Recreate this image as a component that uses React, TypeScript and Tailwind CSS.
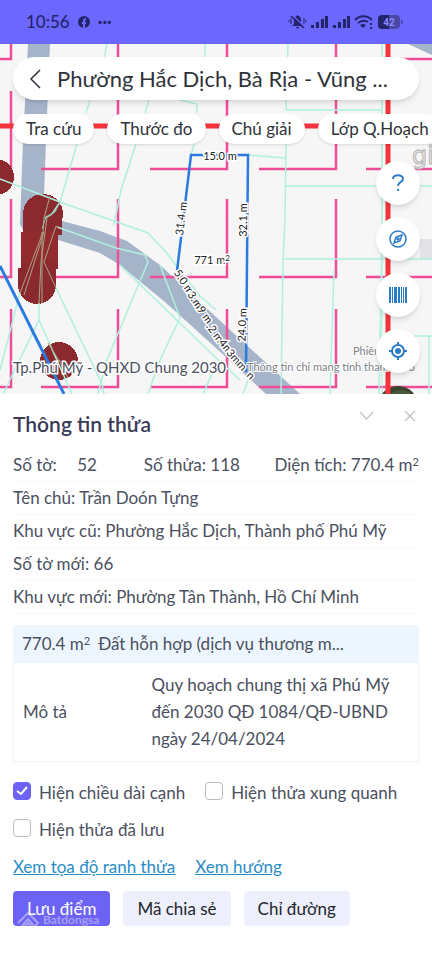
import type { ReactNode } from "react";

type EdgeLabel = { text: string; x: number; y: number; angle: number };

const chips = ["Tra cứu", "Thước đo", "Chú giải", "Lớp Q.Hoạch"];

const edgeLabels: EdgeLabel[] = [
  { text: "15.0 m", x: 220, y: 160, angle: 0 },
  { text: "31.4 m", x: 185, y: 219, angle: -83 },
  { text: "32.1 m", x: 247, y: 220, angle: -90 },
  { text: "24.0 m", x: 246, y: 325, angle: -88 },
  { text: "5.0 m", x: 181, y: 284, angle: 56 },
  { text: "3.m", x: 192, y: 302, angle: 56 },
  { text: "9 m", x: 202, y: 317, angle: 54 },
  { text: ".2 m", x: 212, y: 335, angle: 54 },
  { text: "4m", x: 223, y: 349, angle: 50 },
  { text: "3m", x: 231, y: 359, angle: 48 },
  { text: "m", x: 239, y: 368, angle: 48 },
  { text: "n", x: 248, y: 378, angle: 48 },
];

const gridRows = [59, 169, 277, 387];
const gridColumns = [11, 118, 227, 336, 443];

const MapCanvas = () => (
  <svg
    viewBox="0 44 432 350"
    preserveAspectRatio="xMidYMin slice"
    className="absolute inset-0 h-full w-full bg-[#f6f6f6] font-['Lato','Noto_Sans',sans-serif]"
  >
    <rect x="420" y="239" width="12" height="21" fill="#e4e4e8" />
    <g fill="#a6b4ca">
      <path d="M28 44H50L46 140L43 224L62 221L100 231L127 241L160 265L216 317L300 394H266L216 348L165 302L120 265L100 253L55 239L25 234L20 224L23 140Z" />
      <path d="M408 44H432V55Z" />
    </g>
    <g stroke="#ee4d98" strokeWidth="2.500" fill="none">
      {gridRows.map((y) =>
        gridColumns.map((x) => (
          <path key={`${x}-${y}`} d={`M${x - 77} ${y}H${x}V${y - 78}`} />
        ))
      )}
    </g>
    <g fill="#8b2a2e" shapeRendering="crispEdges">
      <circle cx="-4" cy="177" r="18" />
      <circle cx="43" cy="214" r="20" />
      <rect x="23" y="214" width="39" height="21" />
      <rect x="21" y="232" width="37" height="37" />
      <rect x="18" y="268" width="38" height="17" />
      <circle cx="37" cy="285" r="19" />
      <circle cx="59" cy="361" r="19" />
    </g>
    <rect x="21" y="232" width="37" height="30" fill="#a33030" opacity="0.3" />
    <circle cx="398" cy="406" r="20" fill="#38452f" />
    <circle cx="401" cy="404" r="14" fill="#5c6b4b" opacity="0.5" />
    <g stroke="#aef0df" strokeWidth="1.500" fill="none">
      <path d="M0 179L60 202L148 233L165 251L178 268L200 296L216 310" />
      <path d="M107 44L103 64M90 100L86 113M77 144L60 202L52 214L45 218" />
      <path d="M149 100L145 113M136 144L121 190L114 225" />
      <path d="M180 100L197 104L197 113M205 44V57" />
      <path d="M57 227L116 248L145 255L148 262L107 360L98 394" />
      <path d="M160 265L180 318L160 360L148 394" />
      <path d="M120 265L216 358L240 380" />
      <path d="M39 303V320L3 394M56 288L102 384L104 394" />
      <path d="M39 320L72 394M20 293L0 370M216 365L203 394M248 380L243 394" />
      <path d="M288 44L286 110H381M286 144L285 220L283 260L281 394" />
      <path d="M382 44V240L379 394M285 186H432M248 155L286 158M284 259H432M334 270L330 394" />
      <path d="M379 336H432M429 336V394M194 144L191 155" />
    </g>
    <g stroke="#a9a586" strokeWidth="1" fill="none">
      <path d="M50 196L44 218L43 232L20 293M44 232L24 295M47 218L41 262L39 303M44 262L56 288M56 226L44 262M42 232V303M56 226L60 229" />
      <path d="M48 343L60 362L68 378" />
      <path d="M60 202L55 212L46 217L42 229" stroke="#8fc7a8" />
    </g>
    <path d="M0 126H432M388 44V394" stroke="#f4343c" strokeWidth="5" />
    <path d="M382 44V394" stroke="#aef0df" />
    <g fill="none" stroke="#2a7ae0">
      <path d="M0 266L64 394" strokeWidth="3" />
      <path d="M177 271L191 155H248L246 372" strokeWidth="2.500" />
    </g>
    <text
      x="412"
      y="164"
      fontSize="24"
      fill="#eee"
      stroke="#b3b3b3"
      strokeWidth="1"
      className="font-['DejaVu_Sans',sans-serif]"
    >
      gi
    </text>
    <g
      fontSize="11"
      fill="#222"
      stroke="#fff"
      strokeWidth="3"
      paintOrder="stroke"
      textAnchor="middle"
    >
      {edgeLabels.map(({ text, x, y, angle }) => (
        <text key={`${x}-${y}`} transform={`translate(${x} ${y}) rotate(${angle})`}>
          {text}
        </text>
      ))}
      <text x="212" y="264">
        771 m
        <tspan fontSize="8" dy="-3">
          2
        </tspan>
      </text>
    </g>
    <g stroke="#fff" strokeWidth="3" paintOrder="stroke">
      <text x="13" y="373" fontSize="15" fill="#4a5060">
        Tp.Phú Mỹ - QHXD Chung 2030
      </text>
      <g fontSize="11" fill="#7c7f88">
        <text x="353" y="355" strokeWidth="1">Phiên</text>
        <text x="247" y="371" strokeWidth="2">Thông tin chỉ mang tính tham khảo</text>
      </g>
    </g>
  </svg>
);

const StatusIcons = () => (
  <svg viewBox="0 0 116 18" className="h-[18px] w-[116px]" fill="#24246a">
    <path d="M4 13L6 11V7C6 4 8 3 9 3V2H10V3C12 3 13 5 13 7V11L15 13ZM8 14H11C11 16 8 16 8 14Z" />
    <path d="M3 5V11M1 7V9M16 5V11M18 7V9" stroke="#24246a" strokeWidth="1" />
    <path d="M4 2L17 14" stroke="#6c67ff" strokeWidth="1.500" />
    <path d="M3 3L16 15" stroke="#24246a" strokeWidth="1.500" />
    <path d="M23 12h3v3h-3zM28 9h3v6h-3zM33 6h3v9h-3zM37 3h3v12h-3z" />
    <path d="M45 12h3v3h-3zM50 9h3v6h-3zM55 6h3v9h-3zM59 3h3v12h-3z" />
    <g fill="none" stroke="#24246a" strokeWidth="2">
      <path d="M67 7C72 2 79 2 84 7M70 10C74 7 77 7 80 9" />
    </g>
    <path d="M72 12Q75 10 78 12L75 15ZM82 10h2v2h-2zM82 14h2v2h-2z" />
    <rect x="90" y="2" width="22" height="14" rx="4" fill="#4b48a8" />
    <path d="M94 2H101V16H94Q90 16 90 12V6Q90 2 94 2Z" />
    <path d="M113 6Q117 9 113 12Z" fill="#4b48a8" />
    <text
      x="101"
      y="13"
      fontSize="10"
      fontWeight="700"
      textAnchor="middle"
      fill="#8d89ff"
      className="font-['Roboto',sans-serif]"
    >
      42
    </text>
  </svg>
);

const CompassIcon = () => (
  <svg viewBox="0 0 18 18" className="size-[18px]" fill="none" stroke="#2b7cc7" strokeWidth="1.500">
    <circle cx="9" cy="9" r="8" />
    <path d="M13 5L11 11L5 13L7 7Z" />
    <circle cx="9" cy="9" r="1" />
  </svg>
);

const BarcodeIcon = () => (
  <svg viewBox="0 0 18 16" className="h-4 w-[18px]" fill="#2b7cc7">
    <path d="M0 0h2v16h-2zM3 0h1v16h-1zM5 0h3v16h-3zM9 0h2v16h-2zM12 0h1v16h-1zM14 0h1v16h-1zM16 0h2v16h-2z" />
  </svg>
);

const LocateIcon = () => (
  <svg viewBox="0 0 18 18" className="size-[18px]" fill="none" stroke="#2b7cc7" strokeWidth="2">
    <circle cx="9" cy="9" r="6" />
    <circle cx="9" cy="9" r="2" fill="#2b7cc7" />
    <path d="M9 0V3M9 15V18M0 9H3M15 9H18" />
  </svg>
);

const HelpIcon = () => (
  <svg viewBox="0 0 12 18" className="h-[18px] w-3" fill="none" stroke="#2b7cc7" strokeWidth="2">
    <path d="M1 5C1 0 11 0 11 5C11 8 6 8 6 12" />
    <path d="M5 15H7V17H5Z" fill="#2b7cc7" stroke="none" />
  </svg>
);

const MapButton = ({ label, children }: { label: string; children: ReactNode }) => (
  <button
    type="button"
    aria-label={label}
    className="flex size-11 items-center justify-center rounded-full bg-white shadow-md"
  >
    {children}
  </button>
);

const SquareMetres = ({ value }: { value: string }) => (
  <span>
    {value} m<sup className="text-[11px]">2</sup>
  </span>
);

const Option = ({
  id,
  label,
  defaultChecked,
}: {
  id: string;
  label: string;
  defaultChecked?: boolean;
}) => (
  <div className="flex h-[37px] items-start gap-2">
    <span className="relative size-[18px]">
      <input
        type="checkbox"
        id={id}
        defaultChecked={defaultChecked}
        className="peer block size-[18px] appearance-none rounded border border-[#b9bbc4] bg-white checked:border-[#6c63f5] checked:bg-[#6c63f5]"
      />
      <svg
        viewBox="0 0 18 18"
        className="pointer-events-none absolute inset-0 hidden size-[18px] peer-checked:block"
        fill="none"
        stroke="#fff"
        strokeWidth="2"
      >
        <path d="M4 9L8 12L14 5" />
      </svg>
    </span>
    <label htmlFor={id}>{label}</label>
  </div>
);

const App = () => {
  const rowStyle = "h-[33px] items-center border-b border-[#f8f8f9]";
  const actionStyle = "h-[35px] rounded px-3.5";

  return (
    <div className="min-h-screen bg-white font-['Lato','Noto_Sans',sans-serif] text-[17px] leading-[22px] text-[#4b5060]">
      <header className="flex h-11 items-center justify-between bg-[#6c67ff] pr-7 pl-[26px] text-[#24246a]">
        <div className="flex items-center gap-2">
          <span className="font-medium">10:56</span>
          <svg viewBox="0 0 12 12" className="size-3">
            <circle cx="6" cy="6" r="6" fill="#24246a" />
            <path d="M6 12V5Q6 3 8 3M4 7H8" stroke="#6c67ff" strokeWidth="2" fill="none" />
          </svg>
          <span className="font-bold">···</span>
        </div>
        <StatusIcons />
      </header>

      <section className="relative h-[350px] overflow-hidden">
        <MapCanvas />
        <div className="relative pt-[13px] pl-[13px]">
          <div className="mr-[13px] flex h-[43px] items-center gap-4 rounded-full bg-white pl-4 text-[#30323a] shadow-md">
            <button type="button" aria-label="Quay lại">
              <svg viewBox="0 0 12 20" className="h-5 w-3" fill="none" stroke="currentColor" strokeWidth="1.500">
                <path d="M11 1L2 10L11 19" />
              </svg>
            </button>
            <h1 className="text-[22px]">Phường Hắc Dịch, Bà Rịa - Vũng ...</h1>
          </div>
          <div className="mt-[14px] flex gap-[13px] overflow-hidden pb-1">
            {chips.map((chip) => (
              <button
                key={chip}
                type="button"
                className="h-[30px] shrink-0 rounded-full bg-white px-[13px] whitespace-nowrap text-[#30323a] shadow-sm"
              >
                {chip}
              </button>
            ))}
          </div>
          <div className="mt-[13px] mr-3 flex flex-col items-end gap-3">
            <MapButton label="Trợ giúp">
              <HelpIcon />
            </MapButton>
            <MapButton label="La bàn">
              <CompassIcon />
            </MapButton>
            <MapButton label="Mã vạch">
              <BarcodeIcon />
            </MapButton>
            <MapButton label="Vị trí của tôi">
              <LocateIcon />
            </MapButton>
          </div>
        </div>
      </section>

      <main className="px-[13px]">
        <div className="flex items-start justify-between pt-3">
          <h2 className="pt-1 text-[21px] leading-7 font-semibold text-[#3b3b58]">Thông tin thửa</h2>
          <div className="flex gap-[30px] pt-1 pr-[3px] text-[#c5c7cc]">
            <button type="button" aria-label="Thu gọn">
              <svg viewBox="0 0 15 12" className="h-3 w-[15px]" fill="none" stroke="currentColor" strokeWidth="1.500">
                <path d="M1 2L7.500 9L14 2" />
              </svg>
            </button>
            <button type="button" aria-label="Đóng">
              <svg viewBox="0 0 12 12" className="size-3" fill="none" stroke="currentColor" strokeWidth="1.500">
                <path d="M1 1L11 11M11 1L1 11" />
              </svg>
            </button>
          </div>
        </div>

        <div className="mt-[11px]">
          <div className={`${rowStyle} grid grid-cols-[1fr_1fr_auto]`}>
            <span>
              Số tờ: <span className="ml-4">52</span>
            </span>
            <span>Số thửa: 118</span>
            <SquareMetres value="Diện tích: 770.4" />
          </div>
          <p className={`${rowStyle} flex`}>Tên chủ: Trần Doón Tựng</p>
          <p className={`${rowStyle} flex`}>Khu vực cũ: Phường Hắc Dịch, Thành phố Phú Mỹ</p>
          <p className={`${rowStyle} flex`}>Số tờ mới: 66</p>
          <p className={`${rowStyle} flex`}>Khu vực mới: Phường Tân Thành, Hồ Chí Minh</p>
        </div>

        <table className="mt-[11px] w-full border border-[#f3f4f6] text-left">
          <thead className="bg-[#edf6fe]">
            <tr className="h-[37px]">
              <th colSpan={2} className="px-2 font-normal">
                <SquareMetres value="770.4" />
                <span className="ml-2">Đất hỗn hợp (dịch vụ thương m...</span>
              </th>
            </tr>
          </thead>
          <tbody>
            <tr className="h-[99px]">
              <td className="w-[138px] pl-[9px]">Mô tả</td>
              <td className="pr-5 leading-[27px]">
                Quy hoạch chung thị xã Phú Mỹ đến 2030 QĐ 1084/QĐ-UBND ngày 24/04/2024
              </td>
            </tr>
          </tbody>
        </table>

        <div className="mt-5 flex flex-wrap gap-x-5">
          <Option id="edges" label="Hiện chiều dài cạnh" defaultChecked />
          <Option id="around" label="Hiện thửa xung quanh" />
          <Option id="saved" label="Hiện thửa đã lưu" />
        </div>

        <div className="flex gap-5 text-[#2a8cc6] underline">
          <a href="#coordinates">Xem tọa độ ranh thửa</a>
          <a href="#direction">Xem hướng</a>
        </div>

        <div className="mt-[13px] flex gap-[13px] text-[#24262e]">
          <button type="button" className={`${actionStyle} relative overflow-hidden bg-[#6c63f5] text-white`}>
            Lưu điểm
            <span className="absolute bottom-0 left-1 flex items-end text-xs font-bold text-white/40">
              <svg viewBox="0 0 22 16" className="h-4 w-[22px]" fill="none" stroke="currentColor" strokeWidth="2">
                <path d="M1 13L11 3L21 13L18 16M5 16L11 9L17 16M8 16L11 13L14 16" />
              </svg>
              <span className="ml-1 leading-3">Batdongsa</span>
            </span>
          </button>
          <button type="button" className={`${actionStyle} bg-[#eeeffc]`}>
            Mã chia sẻ
          </button>
          <button type="button" className={`${actionStyle} bg-[#eeeffc]`}>
            Chỉ đường
          </button>
        </div>
      </main>
    </div>
  );
};

export default App;
